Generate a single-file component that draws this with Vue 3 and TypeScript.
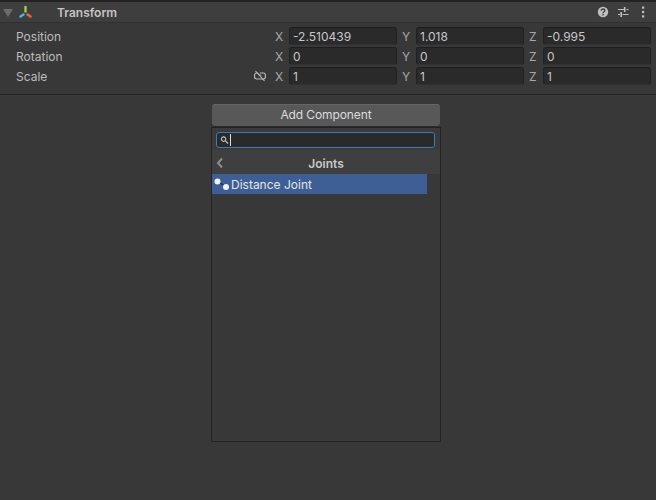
<script setup lang="ts">
interface Axis { label: string; value: string }
interface Row { name: string; linked: boolean; axes: Axis[] }

const rows: Row[] = [
  { name: 'Position', linked: false, axes: [{ label: 'X', value: '-2.510439' }, { label: 'Y', value: '1.018' }, { label: 'Z', value: '-0.995' }] },
  { name: 'Rotation', linked: false, axes: [{ label: 'X', value: '0' }, { label: 'Y', value: '0' }, { label: 'Z', value: '0' }] },
  { name: 'Scale', linked: true, axes: [{ label: 'X', value: '1' }, { label: 'Y', value: '1' }, { label: 'Z', value: '1' }] },
]
</script>

<template>
  <div class="inspector">
    <section class="component">
      <header class="comp-header">
        <span class="foldout"></span>
        <svg class="transform-icon" width="16" height="16" viewBox="0 0 16 16">
          <path d="M8.500 2V8.500" stroke="#9be13c" stroke-width="2.200" fill="none" />
          <path d="M6.500 10.500 3.500 12.500" stroke="#45b4ee" stroke-width="2.600" stroke-linecap="round" fill="none" />
          <path d="M10.500 10.500 13.500 12.500" stroke="#e8663a" stroke-width="2.600" stroke-linecap="round" fill="none" />
        </svg>
        <span class="comp-title">Transform</span>
        <div class="comp-actions">
          <svg width="12" height="12" viewBox="0 0 12 12">
            <circle cx="6" cy="6" r="5.200" fill="#c0c0c0" />
            <path d="M4.200 4.700C4.200 3.600 5 3 6 3s1.900.6 1.900 1.600C7.900 5.800 6 5.800 6 7.200" stroke="#3e3e3e" stroke-width="1.300" fill="none" />
            <rect x="5.300" y="8" width="1.400" height="1.400" fill="#3e3e3e" />
          </svg>
          <svg width="12" height="12" viewBox="0 0 12 12">
            <path d="M1 3.500H7M9.500 3.500H11.500M1 8.500H3M5.500 8.500H11.500" stroke="#c0c0c0" stroke-width="1.200" fill="none" />
            <path d="M7.700 1V6M4.200 6V11" stroke="#c0c0c0" stroke-width="1.600" fill="none" />
          </svg>
          <svg width="12" height="12" viewBox="0 0 12 12">
            <rect x="5" y="0.500" width="2.200" height="2.200" fill="#c0c0c0" />
            <rect x="5" y="4.900" width="2.200" height="2.200" fill="#c0c0c0" />
            <rect x="5" y="9.300" width="2.200" height="2.200" fill="#c0c0c0" />
          </svg>
        </div>
      </header>
      <div class="comp-body">
        <div v-for="row in rows" :key="row.name" class="prop-row">
          <span class="prop-name">{{ row.name }}</span>
          <svg v-if="row.linked" class="link-icon" width="14" height="12" viewBox="0 0 14 12">
            <path d="M5 3H3.500C0.800 3 0.800 9 3.500 9H10.500C13.200 9 13.200 3 10.500 3H7" stroke="#bdbdbd" stroke-width="1.100" fill="none" />
            <path d="M4.500 3.500C5.800 3.500 8 5.500 8.500 6" stroke="#bdbdbd" stroke-width="1" fill="none" />
            <path d="M2.500 1 11.500 11" stroke="#bdbdbd" stroke-width="1.100" fill="none" />
          </svg>
          <div class="axes">
            <div v-for="axis in row.axes" :key="axis.label" class="axis">
              <span class="axis-label">{{ axis.label }}</span>
              <span class="field">{{ axis.value }}</span>
            </div>
          </div>
        </div>
      </div>
    </section>

    <div class="add-area">
      <button class="add-btn">Add Component</button>
      <div class="popup">
        <div class="search-wrap">
          <div class="search">
            <svg width="9" height="10" viewBox="0 0 10 10">
              <circle cx="4" cy="4" r="2.500" stroke="#c4c4c4" stroke-width="1.200" fill="none" />
              <path d="M6 6 9 8.800" stroke="#c4c4c4" stroke-width="1.400" fill="none" />
            </svg>
            <span class="caret"></span>
          </div>
        </div>
        <div class="popup-head">
          <svg class="chevron" width="8" height="12" viewBox="0 0 8 12">
            <path d="M6 1.500 2 6 6 10.500" stroke="#8d8d8d" stroke-width="2" fill="none" />
          </svg>
          <span class="popup-title">Joints</span>
        </div>
        <div class="list">
          <div class="list-item">
            <svg class="joint-icon" width="19" height="20" viewBox="0 0 19 20">
              <path d="M5 7 13 12" stroke="#2c2c2c" stroke-width="1.200" fill="none" />
              <circle cx="5.500" cy="7.500" r="3" fill="#f2f2f2" />
              <circle cx="14" cy="13" r="3" fill="#f2f2f2" />
            </svg>
            <span>Distance Joint</span>
          </div>
        </div>
      </div>
    </div>
  </div>
</template>

<style scoped>
.inspector {
  width: 656px;
  height: 500px;
  background: #383838;
  font-family: Inter, "Noto Sans", sans-serif;
  font-size: 12px;
  color: #bcbcbc;
  overflow: hidden;
  display: flex;
  flex-direction: column;
}
.component {
  border-top: 2px solid #232323;
  border-bottom: 1px solid #232323;
  height: 95px;
  box-sizing: border-box;
}
.comp-header {
  height: 21px;
  box-sizing: border-box;
  background: #3e3e3e;
  border-bottom: 1px solid #303030;
  display: flex;
  align-items: center;
  padding: 0 7px 0 3px;
}
.foldout {
  width: 0;
  height: 0;
  border-left: 5px solid transparent;
  border-right: 5px solid transparent;
  border-top: 8px solid #6d6d6d;
  margin-top: 1px;
}
.transform-icon {
  margin-left: 4px;
}
.comp-title {
  margin-left: 24px;
  font-weight: 600;
  color: #c4c4c4;
}
.comp-actions {
  margin-left: auto;
  display: flex;
  align-items: center;
  gap: 8px;
}
.comp-body {
  padding-top: 4px;
  display: flex;
  flex-direction: column;
  gap: 2px;
}
.prop-row {
  height: 18px;
  display: flex;
  align-items: center;
  padding: 0 5px 0 16px;
}
.prop-name {
  flex: 1;
}
.link-icon {
  margin-right: 3px;
}
.axes {
  display: flex;
}
.axis {
  display: flex;
  align-items: center;
  width: 127px;
}
.axis-label {
  width: 19px;
  box-sizing: border-box;
  padding-left: 5px;
  color: #a8a8a8;
}
.field {
  width: 108px;
  height: 18px;
  box-sizing: border-box;
  background: #2a2a2a;
  border: 1px solid #212121;
  border-top-color: #1e1e1e;
  border-bottom-color: #303030;
  border-radius: 3px;
  padding-left: 3px;
  line-height: 17px;
  color: #c8c8c8;
}
.add-area {
  padding: 9px 4px 0 0;
  display: flex;
  flex-direction: column;
  align-items: center;
}
.add-btn {
  width: 228px;
  height: 22px;
  background: #585858;
  border: 0;
  border-top: 1px solid #656565;
  border-radius: 3px;
  box-shadow: 0 1px 0 #2a2a2a;
  padding: 0 0 2px;
  font: inherit;
  letter-spacing: -0.1px;
  color: #dcdcdc;
}
.popup {
  margin-top: 1px;
  width: 230px;
  height: 315px;
  box-sizing: border-box;
  border: 1px solid #232323;
  display: flex;
  flex-direction: column;
}
.search-wrap {
  height: 22px;
  padding: 4px 5px 0 4px;
  box-sizing: border-box;
  background: #3a3a3a;
}
.search {
  height: 16px;
  box-sizing: border-box;
  background: #2a2a2a;
  border: 1px solid #3a79bb;
  border-radius: 3px;
  display: flex;
  align-items: center;
  padding-left: 3px;
  gap: 1px;
}
.caret {
  width: 1px;
  height: 12px;
  background: #e0e0e0;
}
.popup-head {
  height: 24px;
  padding-top: 2px;
  box-sizing: border-box;
  background: #3f3f3f;
  display: flex;
  align-items: center;
  justify-content: center;
  position: relative;
}
.chevron {
  position: absolute;
  left: 4px;
  top: 7px;
}
.popup-title {
  font-weight: 600;
  color: #c8c8c8;
}
.list {
  flex: 1;
  padding-right: 13px;
}
.list-item {
  height: 20px;
  padding-top: 2px;
  box-sizing: border-box;
  background: #3e5f96;
  display: flex;
  align-items: center;
  color: #e4e4e4;
  line-height: 18px;
}
.joint-icon {
  margin-top: -2px;
}
</style>
